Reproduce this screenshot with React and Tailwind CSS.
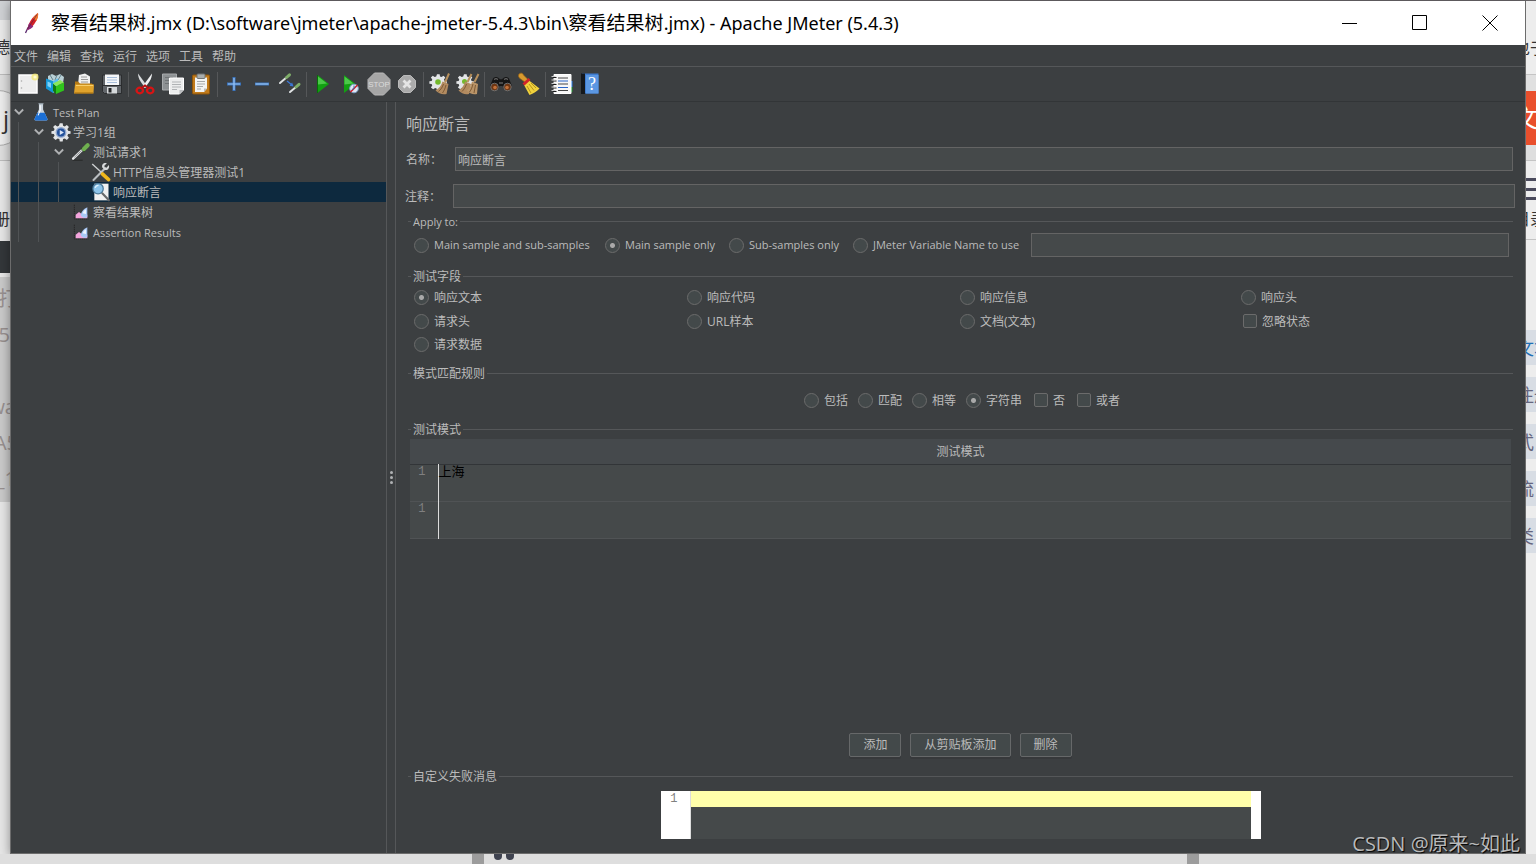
import React from 'react';
import clsx from 'clsx';

const uiFont = "font-['Open_Sans','Noto_Sans_CJK_SC',sans-serif]";

function Icon({ name, className = 'size-6' }) {
  return (
    <svg viewBox="0 0 24 24" className={clsx('shrink-0', className)} fill="none" aria-hidden="true">
      {icons[name]}
    </svg>
  );
}

const gear = (
  <path
    d="M10.500 1.500h3.500l.5 3 2 .8L19 3.500l2.500 2.500-1.800 2.500.8 2 3 .5v3l-3 .5-.8 2 1.800 2.500L19 21.500l-2.500-1.800-2 .8-.5 3h-3.500l-.5-3-2-.8-2.500 1.800L2.500 19l1.800-2.500-.8-2-3-.5v-3l3-.5.8-2L2.500 6 5 3.500l2.500 1.800 2-.8z"
    fill="#e3e5e7"
  />
);

const icons = {
  feather: (
    <>
      <path d="M4.500 22 7 16.500" stroke="#5b2a6e" strokeWidth="1.300" />
      <path d="M6.500 19C6.500 13 11.500 5.500 17 2c1 4-3.500 13.500-10.500 17z" fill="#d22128" />
      <path d="M12 7c2-2.500 3.500-4 5-5 .5 2.500-.2 5-1.500 8z" fill="#f0762a" />
      <path d="M6.500 19c0-2.500.6-4.500 1.800-7l4 3.500c-1.700 1.800-3.700 3-5.800 3.500z" fill="#8d2a7b" />
      <path d="M6.500 18 16 3.500" stroke="#5c1f3d" strokeWidth=".7" />
    </>
  ),
  page: (
    <>
      <rect x="3" y="3" width="18" height="18" fill="#ededed" stroke="#fff" strokeWidth="1.500" />
      <circle cx="5.500" cy="9" r=".8" fill="#aaa" />
      <circle cx="5.500" cy="16" r=".8" fill="#aaa" />
      <circle cx="19" cy="5" r="3.600" fill="#f1e66b" opacity=".75" />
      <circle cx="19" cy="5" r="1.600" fill="#fffbd0" />
    </>
  ),
  templates: (
    <>
      <path d="M4 4 8 2l4 2 4-2 4 3-1 6H4z" fill="#b9d0d6" />
      <path d="M6 3 9 8M13 3l-2 5M17 3l-3 5" stroke="#64838d" />
      <path d="M2 6.500 9 9v12l-7-4.500z" fill="#1598d8" />
      <path d="M9 9 14 6.500V18l-5 3z" fill="#57bdf0" />
      <path d="M3.500 9.500 7 11v5l-3.500-2z" fill="#7ed2f7" />
      <path d="M9 11.500 12 14v8l-3-3z" fill="#127c10" />
      <path d="M12 14 20 10.500v8L12 22z" fill="#2fc51c" />
      <path d="m9 11.500 7-3.500 4 2.500L12 14z" fill="#8ae85a" />
    </>
  ),
  open: (
    <>
      <path d="M7 3 13 1.500l5 3V13H6z" fill="#f1f1f1" />
      <path d="M9 5h6M9 7.500h7M9 10h7" stroke="#9a9a9a" />
      <path d="M3 9.500h3l2 2h12l1 1.500v6H3z" fill="#b67a14" />
      <path d="M2 21.500 3 12.500h19l-.5 9z" fill="#e0a32c" />
      <path d="M4 13.500h17" stroke="#f7cf6d" />
      <path d="M2.500 21h18.500" stroke="#a26a0c" />
    </>
  ),
  save: (
    <>
      <path d="M2.500 3h19v18.500h-17l-2-2z" fill="#62666a" stroke="#2b2d2f" />
      <rect x="5" y="2.500" width="14" height="10.500" fill="#f5f7f9" />
      <path d="M7 5.500h10M7 8h10M7 10.500h10" stroke="#a9bfdb" />
      <path d="M3 13.500h18" stroke="#2b2d2f" />
      <rect x="7" y="15" width="10" height="6.500" fill="#d6d9db" />
      <rect x="8.500" y="16" width="3" height="4.500" fill="#232527" />
    </>
  ),
  cut: (
    <>
      <path d="m5 1.500 9.500 13-2 1.500C9 12 5 7 5 1.500z" fill="#d9dcde" />
      <path d="m19 1.500-9.500 13 2 1.500C15 12 19 7 19 1.500z" fill="#f1f2f3" />
      <ellipse cx="6.800" cy="18.500" rx="3.200" ry="2.800" stroke="#d81414" strokeWidth="2.300" />
      <ellipse cx="17.200" cy="18.500" rx="3.200" ry="2.800" stroke="#d81414" strokeWidth="2.300" />
      <path d="m8.500 16 3.500-2.500 3.500 2.500" stroke="#b50e0e" strokeWidth="2" />
    </>
  ),
  copy: (
    <>
      <path d="M1.500 2h14v16h-14z" fill="#8d9193" stroke="#a8abad" />
      <path d="M4 5.500h8M4 8.500h4M4 11.500h4" stroke="#6f7375" />
      <path d="M8.500 6h14v12l-4 4h-10z" fill="#eceded" stroke="#fff" />
      <path d="M11 10h9M11 12.500h9M11 15h9M11 17.500h5" stroke="#b0b3b5" />
      <path d="M22.500 18h-4v4z" fill="#b8bbbd" />
    </>
  ),
  paste: (
    <>
      <rect x="3.500" y="3" width="17" height="19" rx="1" fill="#c07a1b" stroke="#8d540a" />
      <path d="M6 5.500h12v11l-3 3.500H6z" fill="#f3f4f4" />
      <path d="M8 9.500h8M8 12h8M8 14.500h6M8 17h4" stroke="#a7aaac" />
      <rect x="8" y="2" width="8" height="4.500" rx="1" fill="#a9adad" stroke="#717575" />
      <path d="M18 16.500h-3V20z" fill="#b9bcbe" />
    </>
  ),
  plus: (
    <>
      <path d="M12 5v14M5 12h14" stroke="#3a74bd" strokeWidth="3" />
      <path d="M12 6v12M6 12h12" stroke="#9cc6f5" strokeWidth="1.200" />
    </>
  ),
  minus: (
    <>
      <path d="M5 12h14" stroke="#3a74bd" strokeWidth="3" />
      <path d="M5.500 12h13" stroke="#9cc6f5" strokeWidth="1.200" />
    </>
  ),
  toggle: (
    <>
      <path d="m2 11 7-6" stroke="#dfe2e4" strokeWidth="2" strokeLinecap="round" />
      <path d="m8.500 5.500 3-2.700" stroke="#7fae69" strokeWidth="3" strokeLinecap="round" />
      <path d="m12 20 6-5" stroke="#dfe2e4" strokeWidth="2" strokeLinecap="round" />
      <path d="m18 15 3-2.700" stroke="#7fae69" strokeWidth="3" strokeLinecap="round" />
      <path d="m9 9 5 4" stroke="#3c78d8" strokeWidth="1.300" />
      <path d="m15.500 14.500-4-.7 2.600-3.200z" fill="#3c78d8" />
    </>
  ),
  start: (
    <>
      <path d="M6.500 3 18 12 6.500 21z" fill="#12a012" />
      <path d="M7 4.500 16 11.500 7 12.500z" fill="#4cc94a" />
      <path d="M6.500 3v18" stroke="#067006" />
    </>
  ),
  startNoPauses: (
    <>
      <path d="M5 3 16.500 12 5 21z" fill="#12a012" />
      <path d="M5.500 4.500 14.500 11.500 5.500 12.500z" fill="#4cc94a" />
      <circle cx="15" cy="16.500" r="4.300" fill="#dfe8f4" stroke="#7fa2cc" />
      <path d="m11.500 20 7-7" stroke="#d3202c" strokeWidth="1.600" />
      <path d="M15 13.500v3l-2 1" stroke="#3b6bab" />
    </>
  ),
  stop: (
    <>
      <path d="M7.500 1h9L23 7.500v9L16.500 23h-9L1 16.500v-9z" fill="#a6a6a6" stroke="#b9b9b9" />
      <text x="12" y="15" textAnchor="middle" fontSize="8" fill="#dcdcdc" fontFamily="Liberation Sans">
        STOP
      </text>
    </>
  ),
  shutdown: (
    <>
      <path d="M8.500 3.500h7l5 5v7l-5 5h-7l-5-5v-7z" fill="#ababab" stroke="#bababa" />
      <path d="m8.500 8.500 7 7m0-7-7 7" stroke="#e4e4e4" strokeWidth="2.800" />
    </>
  ),
  clear: (
    <>
      <g transform="translate(1 1) scale(.76)">{gear}</g>
      <circle cx="10" cy="10" r="2.800" fill="#73b82c" />
      <path d="m21 1.500-4 9" stroke="#b8905c" strokeWidth="2" />
      <path d="m14.500 9.500 6 2.500-2 10c-4 1-8-.5-11-3.500 3.500-2 6-5 7-9z" fill="#b28b60" />
      <path d="M15.500 12c-1 3-2.500 5.500-5 7.500M18 13c-.6 3-1.800 5.500-3.500 8" stroke="#7e5a35" />
    </>
  ),
  clearAll: (
    <>
      <g transform="translate(0 1) scale(.76)">{gear}</g>
      <circle cx="8.500" cy="9.500" r="2.500" fill="#73b82c" />
      <path d="m15.500 2-4 8M22.500 2l-4 8" stroke="#b8905c" strokeWidth="2" />
      <path d="m9 9.500 6 2.500-2 10c-4 1-7.500-.5-10.500-3.500 3.500-2 5.500-5 6.500-9z" fill="#b28b60" />
      <path d="m16 9.500 6 2.500-1 10c-4 1-7.500-.5-10.500-3.500 3.500-2 4.500-5 5.500-9z" fill="#b99468" />
      <path d="M10.500 12c-1 3-2.500 5.500-4.500 7.500M17 12c-.8 3-1.500 5.500-3.500 8M19.500 13l-1.500 8" stroke="#7e5a35" />
    </>
  ),
  search: (
    <>
      <path d="M4 6.500c1.500-2 4.500-2 6 0l2 1 2-1c1.500-2 4.500-2 6 0l3 7.500-1.500 4h-6L13.500 14h-3l-2 4h-6L1 14z" fill="#161616" />
      <path d="M5 7.500c1-1 3-1 4 0M15 7.500c1-1 3-1 4 0M10 11h4" stroke="#7d7d7d" />
      <circle cx="5.500" cy="15" r="3.800" fill="#6d3512" stroke="#6f6f6f" />
      <circle cx="18.500" cy="15" r="3.800" fill="#6d3512" stroke="#6f6f6f" />
      <circle cx="6" cy="15.500" r="1.800" fill="#c2713a" />
      <circle cx="18" cy="15.500" r="1.800" fill="#c2713a" />
    </>
  ),
  searchReset: (
    <>
      <path d="M2 2c1.500-1.500 4-1 4.500 1l5 5-3 2.500L3 6.500C1.500 5.500 1 3.500 2 2z" fill="#d99a2e" stroke="#9a6416" strokeWidth=".7" />
      <path d="m12 8.500 10.500 8c-2.500 3-6 5-10 6.500L7 13z" fill="#f0d23c" />
      <path d="m12 12 5 6.500M10 14l4 7M14 11l5 5" stroke="#b8951c" />
      <path d="m6.500 12.500 6-5.500" stroke="#d2232a" strokeWidth="3" />
    </>
  ),
  functionHelper: (
    <>
      <path d="M20 9h2.500v6H20z" fill="#2a7be0" />
      <path d="M20 15h2.500v5H20z" fill="#1d8e2c" />
      <path d="M4 2.500h17v19H4z" fill="#f7f7f7" stroke="#fff" />
      <path d="M8 6h10M8 12h10M8 18.500h10" stroke="#444" />
      <path d="M8 9h10M8 15.500h10" stroke="#2a66c8" strokeWidth="1.200" />
      <path d="M3 5.500h3.500M3 9h3.500M3 12.500h3.500M3 16h3.500M3 19.500h3.500" stroke="#1d1d1d" strokeWidth="1.200" />
      <path d="M1.500 4.500h4M1.500 8h4M1.500 11.500h4M1.500 15h4M1.500 18.500h4" stroke="#cfcfcf" />
    </>
  ),
  help: (
    <>
      <path d="M4 1.500h16.500v20H4z" fill="#3f7dd1" />
      <path d="M8 3h12.500v18.500H8z" fill="#5b97e2" />
      <path d="M3 1.500h4v20.500H3z" fill="#15181c" />
      <text x="14" y="18" textAnchor="middle" fontSize="18" fill="#fff" fontFamily="Liberation Serif">
        ?
      </text>
    </>
  ),
  flask: (
    <>
      <path d="M9.500 2h5v7l5.300 11.500c.4 1-.3 1.700-1.300 1.700h-13c-1 0-1.700-.7-1.300-1.700L9.500 9z" fill="#c9d3dc" />
      <path d="M7.600 13h8.800l3.400 7.500c.4 1-.3 1.700-1.300 1.700h-13c-1 0-1.700-.7-1.300-1.700z" fill="#1c6fd4" />
      <path d="M11 4v6l-2.500 6" stroke="#fff" strokeWidth="1.300" />
      <path d="M9 2h6" stroke="#8f9aa3" strokeWidth="1.500" />
    </>
  ),
  group: (
    <>
      {gear}
      <circle cx="12" cy="12.500" r="6.500" fill="#8fa6cc" />
      <circle cx="12" cy="12.500" r="4.800" fill="#23519b" />
      <path d="m10.500 9.500 5 3-5 3z" fill="#dbe6f6" />
    </>
  ),
  sampler: (
    <>
      <path d="M2 22h12" stroke="#222" strokeWidth="1.500" opacity=".6" />
      <path d="m2.500 20 11-10.500" stroke="#e3e5e7" strokeWidth="2.800" strokeLinecap="round" />
      <path d="m4 18.500 9-8.500" stroke="#85898c" />
      <path d="m12 7 4.500 4.500" stroke="#2c4b22" strokeWidth="2" />
      <path d="m15.500 8.500 4.500-4.500" stroke="#6fb04f" strokeWidth="5" strokeLinecap="round" />
    </>
  ),
  tools: (
    <>
      <path d="m3 21.500 14-14" stroke="#b9bdc0" strokeWidth="2.500" strokeLinecap="round" />
      <path d="M21.500 3.500 18.500 7l-2-.5L16 4.500l3-3c-4-1-6.500 2-5.500 5l3 3c3 1 6-1.500 5-6z" fill="#d8dadc" />
      <path d="M1.500 2.500 13 13" stroke="#cdd0d2" strokeWidth="1.700" />
      <path d="m14 14.500 7 6.500" stroke="#f0b81c" strokeWidth="4.500" strokeLinecap="round" />
    </>
  ),
  assertion: (
    <>
      <path d="M4 2h17v20H4z" fill="#f0f1f1" />
      <path d="m13.500 13.500 8 8.500" stroke="#66696b" strokeWidth="2.500" strokeLinecap="round" />
      <circle cx="8.500" cy="8" r="6.200" fill="#8cc4ea" stroke="#4a7897" strokeWidth="1.500" />
      <path d="M5 7c.6-2 2-3 4-3" stroke="#e4f4ff" strokeWidth="1.500" />
    </>
  ),
  listener: (
    <>
      <path d="M2 1v21.500h21" stroke="#232323" strokeWidth="1.300" strokeDasharray="2 1" />
      <path d="M4 21.500V16l5-4 4 3 3-2 5.500 3v5.500z" fill="#f3a4dc" />
      <path d="M11.500 16c2-6 5-9 10-11v14c-2 2.500-8 2.500-10-3z" fill="#a9c8f5" />
      <path d="M14.500 14c1-3 2.500-5 5-6v7z" fill="#eef4ff" />
    </>
  ),
  chevron: <path d="m2 6 10 10L22 6" stroke="#afb1b3" strokeWidth="4.500" />,
};

const menus = ['文件', '编辑', '查找', '运行', '选项', '工具', '帮助'];

const toolGroups = [
  [['page', '新建'], ['templates', '模板'], ['open', '打开'], ['save', '保存']],
  [['cut', '剪切'], ['copy', '复制'], ['paste', '粘贴']],
  [['plus', '展开全部'], ['minus', '折叠全部'], ['toggle', '切换']],
  [['start', '启动'], ['startNoPauses', '不停顿启动'], ['stop', '停止'], ['shutdown', '关闭']],
  [['clear', '清除'], ['clearAll', '清除全部']],
  [['search', '搜索'], ['searchReset', '重置搜索']],
  [['functionHelper', '函数助手'], ['help', '帮助']],
];

// guides: how many ancestor lines run through the row
const tree = [
  { label: 'Test Plan', icon: 'flask', guides: 0, open: true, latin: true },
  { label: '学习1组', icon: 'group', guides: 1, open: true },
  { label: '测试请求1', icon: 'sampler', guides: 2, open: true },
  { label: 'HTTP信息头管理器测试1', icon: 'tools', guides: 3 },
  { label: '响应断言', icon: 'assertion', guides: 3, selected: true },
  { label: '察看结果树', icon: 'listener', guides: 2 },
  { label: 'Assertion Results', icon: 'listener', guides: 2, latin: true },
];

function TitleBar() {
  return (
    <header className="flex h-11 items-center bg-white text-black">
      <Icon name="feather" className="ml-2.5 size-6" />
      <h1 className="ml-1.5 flex-1 truncate font-['Noto_Sans','Noto_Sans_CJK_SC',sans-serif] text-lg leading-6">
        <span className="text-[19px]">察看结果树</span>
        .jmx (D:\software\jmeter\apache-jmeter-5.4.3\bin\
        <span className="text-[19px]">察看结果树</span>
        .jmx) - Apache JMeter (5.4.3)
      </h1>
      <div className="flex">
        <button aria-label="最小化" className="grid h-11 w-[70px] place-items-center">
          <svg className="size-4" viewBox="0 0 16 16" stroke="#000"><path d="M0 8.500h15" /></svg>
        </button>
        <button aria-label="最大化" className="grid h-11 w-[70px] place-items-center">
          <svg className="size-4" viewBox="0 0 16 16" stroke="#000" fill="none"><path d="M.5.5h14v14H.5z" /></svg>
        </button>
        <button aria-label="关闭" className="grid h-11 w-[70px] place-items-center">
          <svg className="size-4" viewBox="0 0 16 16" stroke="#000"><path d="m.5.500 15 15m0-15-15 15" /></svg>
        </button>
      </div>
    </header>
  );
}

function Toolbar() {
  return (
    <div className="flex h-[35px] items-center border-t border-[#555759] pl-[3px]" role="toolbar">
      {toolGroups.map((group, i) => (
        <React.Fragment key={group[0][0]}>
          {i > 0 && <span className="mx-0.5 h-[25px] w-px bg-[#555759]" />}
          {group.map(([name, label]) => (
            <button key={name} aria-label={label} className="grid h-6 w-7 place-items-center">
              <Icon name={name} />
            </button>
          ))}
        </React.Fragment>
      ))}
    </div>
  );
}

function TreeRow({ node }) {
  return (
    <li className={clsx('flex h-5 items-center', node.selected && 'bg-[#0d293e]')}>
      {Array.from({ length: node.guides }, (_, i) => (
        <span key={i} className="flex h-5 w-5 shrink-0 pl-[7px]">
          <span className="w-px bg-[#505355]" />
        </span>
      ))}
      {node.open && (
        <span className="flex w-5 shrink-0 pl-[3px]">
          <Icon name="chevron" className="size-2.5" />
        </span>
      )}
      {!node.open && <span className="w-5 shrink-0" />}
      <span className="grid w-5 shrink-0 place-items-center">
        <Icon name={node.icon} className={node.icon === 'listener' ? 'size-4' : 'size-5'} />
      </span>
      <span className={clsx('ml-0.5 pt-0.5 leading-4 whitespace-nowrap', node.latin && 'text-[11px]')}>
        {node.label}
      </span>
    </li>
  );
}

const boxStyle = 'shrink-0 appearance-none border border-[#6b6b6b] bg-[#43494a]';

function Radio({ name, label, checked, className }) {
  return (
    <label className={clsx('flex items-center gap-[5px] whitespace-nowrap', className)}>
      <input
        type="radio"
        name={name}
        defaultChecked={checked}
        className={clsx(boxStyle, 'size-[15px] rounded-full checked:bg-[radial-gradient(circle,#a9a9a9_2px,transparent_3px)]')}
      />
      <span className="pt-px">{label}</span>
    </label>
  );
}

function Check({ label, className }) {
  return (
    <label className={clsx('flex items-center gap-[5px] whitespace-nowrap', className)}>
      <input type="checkbox" className={clsx(boxStyle, 'size-3.5 rounded-xs checked:bg-[#a9a9a9]')} />
      <span className="pt-px">{label}</span>
    </label>
  );
}

function Section({ title, className, children }) {
  return (
    <fieldset className={clsx('mx-3 min-w-0 border-t border-[#555759]', className)}>
      <legend className="ml-[3px] h-4 px-0.5 leading-[18px]">{title}</legend>
      {children}
    </fieldset>
  );
}

const textInput = 'h-6 min-w-0 flex-1 border border-[#646464] bg-[#45494a] px-0.5 pt-0.5 outline-none';
const formButton =
  'h-6 rounded-xs border border-[#666869] bg-[#43494a] px-[13px] leading-4 shadow-[0_2px_0_#37393b]';

function AssertionPanel() {
  return (
    <section className="flex min-w-0 flex-1 flex-col border-l border-[#555759]">
      <h2 className="mt-2.5 ml-2.5 h-6 text-base leading-6">响应断言</h2>
      <div className="mt-[11px] mr-3 ml-2.5 flex items-center">
        <label htmlFor="name" className="w-[49px] pt-0.5">名称：</label>
        <input id="name" defaultValue="响应断言" className={textInput} />
      </div>
      <div className="mt-[13px] mr-2.5 ml-[9px] flex items-center">
        <label htmlFor="comment" className="w-12 pt-0.5">注释：</label>
        <input id="comment" className={textInput} />
      </div>

      <Section title={<span className="text-[11px]">Apply to:</span>} className="mt-[5px] h-[55px]">
        <div className="mt-1 flex items-center gap-[9px] pr-1 pl-1.5 text-[11px]">
          <Radio name="scope" label="Main sample and sub-samples" className="min-w-[182px]" />
          <Radio name="scope" label="Main sample only" className="min-w-[115px]" checked />
          <Radio name="scope" label="Sub-samples only" className="min-w-[115px]" />
          <div className="flex flex-1 items-center gap-[7px]">
            <Radio name="scope" label="JMeter Variable Name to use" className="min-w-[171px]" />
            <input aria-label="JMeter Variable Name" className={textInput} />
          </div>
        </div>
      </Section>

      <Section title="测试字段" className="h-[97px]">
        <div className="mt-0.5 grid grid-cols-[273fr_273fr_281fr_272fr] grid-rows-[23px_24px_23px] pl-1.5">
          <Radio name="field" label="响应文本" checked />
          <Radio name="field" label="响应代码" />
          <Radio name="field" label="响应信息" />
          <Radio name="field" label="响应头" />
          <Radio name="field" label="请求头" />
          <Radio name="field" label="URL样本" />
          <Radio name="field" label="文档(文本)" />
          <Check label="忽略状态" className="pl-0.5" />
          <Radio name="field" label="请求数据" />
        </div>
      </Section>

      <Section title="模式匹配规则" className="h-14">
        <div className="mt-[7px] flex h-6 items-center justify-center gap-2.5 pl-[3px]">
          <Radio name="rule" label="包括" />
          <Radio name="rule" label="匹配" />
          <Radio name="rule" label="相等" />
          <Radio name="rule" label="字符串" checked />
          <Check label="否" className="ml-0.5" />
          <Check label="或者" className="ml-0.5" />
        </div>
      </Section>

      <Section title="测试模式" className="flex-1">
        <div className="flex h-full flex-col pt-0.5 pb-[11px]">
          <div className="flex-1 px-0.5">
            <table className="w-full table-fixed border-collapse bg-[#45494a]">
              <colgroup>
                <col className="w-7" />
                <col />
              </colgroup>
              <thead>
                <tr className="h-[25px] border-b border-[#323538] bg-[#45494c]">
                  <th colSpan="2" className="p-0 pt-0.5 font-normal">测试模式</th>
                </tr>
              </thead>
              <tbody>
                {['上海', ''].map((pattern, i) => (
                  <tr key={i} className="h-[37px] border-b border-[#505355] align-top">
                    <td className="border-r border-[#dddddd] p-0 pr-3 text-right font-['Liberation_Mono',monospace] leading-[14px] text-[#808080]">
                      1
                    </td>
                    <td className="p-0 text-[13px] leading-3 text-black">{pattern}</td>
                  </tr>
                ))}
              </tbody>
            </table>
          </div>
          <div className="flex justify-center gap-[9px]">
            <button className={formButton}>添加</button>
            <button className={formButton}>从剪贴板添加</button>
            <button className={formButton}>删除</button>
          </div>
        </div>
      </Section>

      <Section title="自定义失败消息" className="h-[85px]">
        <div className="mx-auto mt-[7px] flex h-12 max-w-[600px] bg-white">
          <span className="w-[30px] shrink-0 border-r border-[#dddddd] pr-3 text-right font-['Liberation_Mono',monospace] leading-4 text-[#808080]">
            1
          </span>
          <textarea
            aria-label="自定义失败消息"
            className="mr-2.5 h-12 min-w-0 flex-1 resize-none bg-[#45494a] bg-[linear-gradient(#ffffaa_16px,transparent_16px)] leading-4 text-black outline-none"
          />
        </div>
      </Section>
    </section>
  );
}

// slivers of the browser page that stay visible behind the window
function LeftEdge() {
  return (
    <div className="flex w-2.5 shrink-0 flex-col overflow-hidden bg-[#e6e6e6] text-base leading-5 whitespace-nowrap text-[#333]">
      <div className="h-[19px] bg-[#cfd1d4]" />
      <div className="flex h-[55px] items-center justify-end border-b border-[#bbb] bg-[#e9e9e9]">德</div>
      <div className="flex h-[86px] items-center justify-end border-b border-[#bbb] bg-[#dedede]">
        <span className="-mr-4 h-14 w-14 shrink-0 rounded-full border border-[#aaa] bg-[#ececec] pr-4 text-right text-2xl leading-[56px]">j</span>
      </div>
      <div className="flex h-20 items-center justify-end pt-9">册</div>
      <div className="h-8 bg-[#33373a]" />
      <div className="mt-1 flex h-[225px] flex-col items-end bg-[#c9c9c9] pt-1 text-xl leading-9 text-[#98908f]">
        <span className="-mr-2">打</span>
        <span className="mb-9">5</span>
        <span className="-mr-1.5">wa</span>
        <span className="-mr-2">A5</span>
        <span className="-mr-1.5">_1</span>
      </div>
    </div>
  );
}

function RightEdge() {
  return (
    <div className="flex w-2.5 shrink-0 flex-col overflow-hidden bg-[#ededed] text-base leading-5 whitespace-nowrap text-[#333]">
      <div className="flex h-[74px] items-end border-b border-[#c4c4c4] pb-4"><span className="-ml-3">也于</span></div>
      <div className="h-4 bg-[#e0e0e0]" />
      <div className="flex h-[54px] items-center bg-[#e94f2c] text-2xl text-white"><span className="-ml-3">文</span></div>
      <div className="h-4 border-b border-[#c4c4c4] bg-[#dedede]" />
      <div className="mt-[17px] flex h-[22px] flex-col justify-between">
        <span className="h-[3px] bg-[#4a4a5c]" />
        <span className="h-[3px] bg-[#4a4a5c]" />
        <span className="h-[3px] bg-[#4a4a5c]" />
      </div>
      <div className="mb-[90px] flex h-10 items-end border-b border-[#c4c4c4] pb-2.5"><span className="-ml-3">目录</span></div>
      {['文本', '注册', '式', '流', '类'].map((text, i) => (
        <div
          key={text}
          className={clsx('mb-3 flex h-[35px] shrink-0 items-center bg-[#d8dde4] text-lg', i === 0 ? 'text-[#1f6fb5]' : 'text-[#65667f]')}
        >
          <span className="-ml-2.5">{text}</span>
        </div>
      ))}
    </div>
  );
}

export default function App() {
  return (
    <div className={clsx('relative flex min-h-screen flex-col overflow-hidden bg-[#e6e6e6] text-xs text-[#bbbbbb]', uiFont)}>
      <div className="h-px bg-[#6a676a]" />
      <div className="flex flex-1">
        <LeftEdge />
        <div className="flex min-w-0 flex-1 flex-col border-r border-b border-l border-[#6c6c6c] bg-[#3c3f41] shadow-[0_2px_10px_#00000066]">
          <TitleBar />
          <nav className="flex h-[21px] items-center gap-[9px] pt-0.5 pl-[3px]">
            {menus.map((menu) => (
              <button key={menu} className="leading-4">{menu}</button>
            ))}
          </nav>
          <Toolbar />
          <div className="flex flex-1 border-t border-[#323537]">
            <ul className="w-[375px] shrink-0">
              {tree.map((node) => (
                <TreeRow key={node.label} node={node} />
              ))}
            </ul>
            <div className="flex w-[9px] shrink-0 flex-col items-center justify-center gap-0.5 border-l border-[#555759]">
              <span className="size-[3px] rounded-full bg-[#afb1b3]" />
              <span className="size-[3px] rounded-full bg-[#afb1b3]" />
              <span className="size-[3px] rounded-full bg-[#afb1b3]" />
            </div>
            <AssertionPanel />
          </div>
        </div>
        <RightEdge />
      </div>
      <div className="flex h-2.5 items-stretch overflow-hidden bg-[#dedede]">
        <span className="ml-[472px] w-3 bg-[#9c9c9c]" />
        <span className="ml-2.5 flex items-start gap-1">
          <span className="h-1.5 w-2 rounded-b-full bg-[#3f4350]" />
          <span className="h-1.5 w-2 rounded-b-full bg-[#3f4350]" />
        </span>
        <span className="ml-auto w-3 bg-[#9c9c9c]" />
        <span className="w-[337px]" />
      </div>
      <p className="absolute right-4 bottom-2 text-xl leading-6 text-[#b8b9ba] [text-shadow:1px_1px_1px_#000]">
        CSDN @原来~如此
      </p>
    </div>
  );
}
